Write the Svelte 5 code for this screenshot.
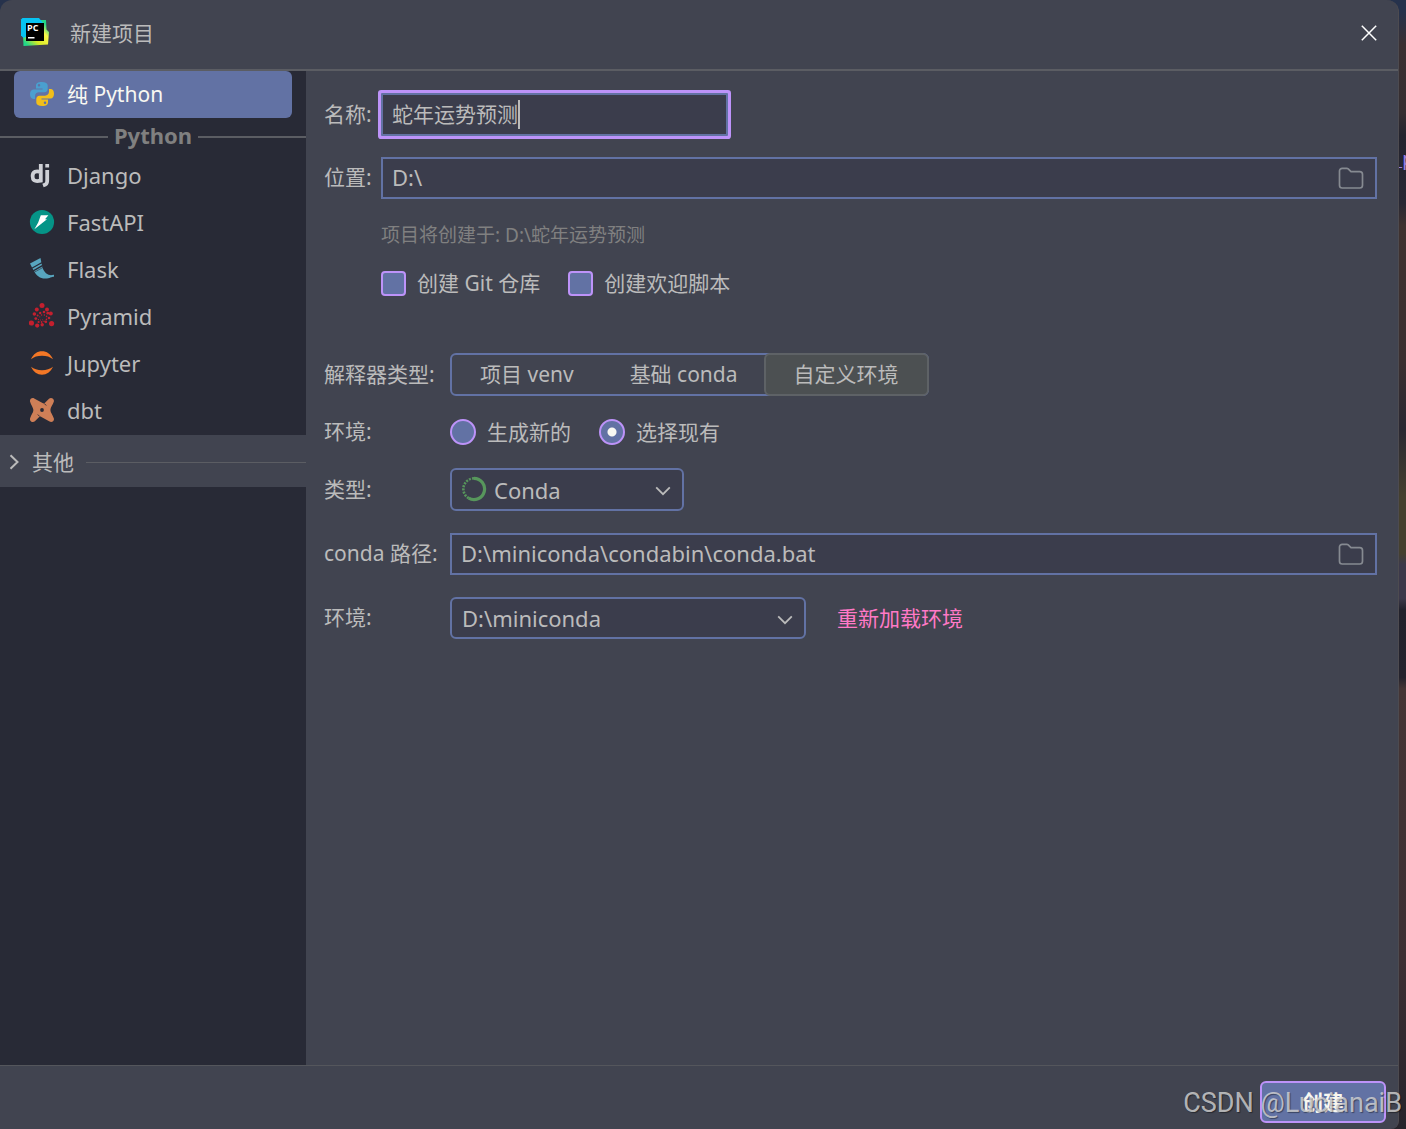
<script lang="ts">
	let name = $state('蛇年运势预测');
	let location = $state('D:\\');
	let condaPath = $state('D:\\miniconda\\condabin\\conda.bat');
	let git = $state(false);
	let welcome = $state(false);
	let envMode = $state('existing');
	let interpreter = $state('自定义环境');
	let selected = $state('纯 Python');

	const frameworks = ['Django', 'FastAPI', 'Flask', 'Pyramid', 'Jupyter', 'dbt'];
	const interpreters = ['项目 venv', '基础 conda', '自定义环境'];

	// rings of dots for the Pyramid logo, from the outside in
	const pyramidDots = [
		[13, 2.6, 2.5], [7.8, 6.4, 2], [18, 6.4, 2], [5.4, 11, 1.8], [21.8, 10.4, 2],
		[2.4, 20, 2.6], [22.6, 20.6, 2.6], [8.2, 22.6, 2.1], [13.2, 21.8, 1.7], [16.8, 18.8, 1.4],
		[11.2, 10, 1.2], [15, 9, 1.3], [18.8, 10.2, 1.4], [6.8, 15.6, 1.4], [9.6, 19, 1.1],
		[20, 15, 1.3], [8.6, 12.6, 1], [17.6, 13.4, 0.8], [17.4, 16.4, 0.8], [12.6, 19, 0.9],
		[9.4, 16.6, 0.7], [15, 18.2, 0.7], [12.6, 12, 0.7], [15.4, 12, 0.7], [10.8, 13.8, 0.6],
		[11.4, 17, 0.6], [13.6, 16.8, 0.5]
	];
</script>

{#snippet folder()}
	<button class="browse" type="button" aria-label="浏览">
		<svg width="26" height="24" viewBox="0 0 26 24" fill="none" stroke="currentColor" stroke-width="1.7">
			<path d="M1.500 5a2.700 2.700 0 0 1 2.700-2.700h4.600c.6 0 1 .2 1.400.6L13 5.700h8.800a2.700 2.700 0 0 1 2.700 2.700v10.900a2.700 2.700 0 0 1-2.700 2.700H4.200a2.700 2.700 0 0 1-2.700-2.700z" />
		</svg>
	</button>
{/snippet}

{#snippet chevron()}
	<svg class="chevron" width="16" height="10" viewBox="0 0 16 10" fill="none" stroke="currentColor" stroke-width="1.8">
		<path d="M1.200 1.400 8 8.200l6.800-6.800" />
	</svg>
{/snippet}

{#snippet icon(id: string)}
	<svg class="icon" width="26" height="26" viewBox="0 0 26 26">
		{#if id === '纯 Python'}
			<path fill="#4a9fcf" d="M12.800 1C8.600 1 7 2.600 7 4.500V7.500h6.500v1H4.500C2 8.500 1 10.700 1 13.300s1.200 4.700 3.500 4.700H6v-2.800c0-2.300 1.700-3.900 4-3.900h5.500c1.900 0 3.200-1.500 3.200-3.300V4.500C18.700 2.300 16.500 1 12.800 1zM10 2.900a1.200 1.200 0 1 1 0 2.500 1.200 1.200 0 0 1 0-2.500z" />
			<path fill="#f2bf1a" d="M13.200 25c4.200 0 5.800-1.600 5.800-3.500v-3h-6.500v-1h9c2.500 0 3.500-2.200 3.500-4.800S23.800 8 21.500 8H20v2.800c0 2.300-1.700 3.900-4 3.900h-5.500c-1.900 0-3.200 1.500-3.200 3.300v3.500c0 2.200 2.200 3.500 5.900 3.500zm2.800-1.900a1.200 1.200 0 1 1 0-2.500 1.200 1.200 0 0 1 0 2.500z" />
		{:else if id === 'Django'}
			<g fill="none" stroke="#ced0d6" stroke-width="3.800">
				<path d="M11.800 2v16.600c-7 1.500-8.200-.8-8.200-4.600 0-4.400 3.500-5.500 8.200-4" />
				<path d="M18.200 8v10.500c0 3-.8 3.800-4.200 5" />
				<path d="M18.200 2v3.600" />
			</g>
		{:else if id === 'FastAPI'}
			<circle cx="13" cy="13" r="12.100" fill="#059487" />
			<path fill="#fff" d="M11.800 6.200h7.600L16 10.200h2L5.400 20.200l3.800-6.800z" />
		{:else if id === 'Flask'}
			<g fill="#58a6bf">
				<path d="M1 7.500 11.500 2l.8 4.200L3 11.500z" />
				<path d="m3.500 12.600 9-5.200.5 1.700-8.600 5z" />
				<path d="m5 15.200 8.300-4.800c.8 4 3.700 8 7.700 8.700 1.600.3 2.800-.5 4-.2v1.800c-2.500 0-4.200 1.600-8.500 1.900C11.500 22.900 7.500 19.500 5 15.200z" />
			</g>
			<path d="m4.500 16.700 9.500-5.300" stroke="#282a36" stroke-width="0.6" />
		{:else if id === 'Pyramid'}
			{#each pyramidDots as [cx, cy, r]}
				<circle {cx} {cy} {r} fill="#c41f2e" />
			{/each}
		{:else if id === 'Jupyter'}
			<path fill="#f37726" d="M2 9.200C4.500 3.900 8.300 1.300 13 1.300s8.500 2.600 11 7.900C21 6.900 17.500 5.800 13 5.800S5 6.900 2 9.200zM2 16.800c2.500 5.300 6.300 7.900 11 7.900s8.500-2.600 11-7.900c-3 2.300-6.500 3.400-11 3.400S5 19.100 2 16.800z" />
		{:else}
			<path fill="#cf7f57" d="M1 4.400C.6 2 3 .3 5.200 1.400l8.300 4.700c1.100.6 1.700.4 2.500-.4l4-4c2.200-2 5.700.2 4.800 3.100-1 3.200-3.400 5.700-3.400 8.200s2.400 5 3.400 8.200c.9 2.600-1.800 4.600-4.200 3.400l-8.200-4.700c-1.100-.6-1.700-.4-2.500.4l-4 4c-2.200 2-5.700-.2-4.800-3.100C2 18 4.400 15.500 4.400 13S1.700 7.500 1 4.400z" />
			<circle cx="13" cy="13" r="1.900" fill="#282a36" />
			<path d="m15.200 6.600 2.200 1.800M10.800 19.400l-2.200-1.800" stroke="#282a36" stroke-width="0.8" />
		{/if}
	</svg>
{/snippet}

{#snippet project(id: string)}
	<button class="item" class:selected={selected === id} type="button" onclick={() => (selected = id)}>
		{@render icon(id)}
		{id}
	</button>
{/snippet}

<div class="desktop">
	<span class="behind" aria-hidden="true">_p</span>
	<div class="dialog">
		<header>
			<svg width="30" height="30" viewBox="0 1 30 30">
				<defs>
					<linearGradient id="warm" x1="0" y1="1" x2="1" y2="0">
						<stop offset="0.100" stop-color="#21d789" />
						<stop offset="0.350" stop-color="#d5ea24" />
						<stop offset="0.650" stop-color="#fcf84a" />
						<stop offset="0.850" stop-color="#21d789" />
					</linearGradient>
				</defs>
				<path fill="url(#warm)" d="M19 3h7l.5 9.500L29 15l-1 12.500L3.500 29 3 18z" />
				<path fill="#07c3f2" d="M1 2.500 2.500 1H19l4 5-13 12-6.500 3L1 18.500z" />
				<path d="M6 6h18v18H6z" />
				<path d="M8 20.700h6.500" stroke="#fff" stroke-width="1.500" />
				<text x="7" y="14" fill="#fff">PC</text>
			</svg>
			<h1>新建项目</h1>
			<button class="close" type="button" aria-label="关闭">
				<svg width="16" height="16" viewBox="0 0 16 16" stroke="currentColor" stroke-width="1.500">
					<path d="m.8.800 14.400 14.400M15.200.8.800 15.200" />
				</svg>
			</button>
		</header>

		<div class="body">
			<nav>
				{@render project('纯 Python')}
				<div class="group"><span>Python</span></div>
				<div class="frameworks">
					{#each frameworks as id}
						{@render project(id)}
					{/each}
				</div>
				<button class="other" type="button">
					<svg width="11" height="16" viewBox="0 0 11 16" fill="none" stroke="currentColor" stroke-width="2">
						<path d="m1.500 1.200 7 6.800-7 6.800" />
					</svg>
					其他
				</button>
			</nav>

			<form onsubmit={(e) => e.preventDefault()}>
				<div class="grid basics">
					<label class="caption" for="name">名称:</label>
					<div class="field focused">
						<input id="name" type="text" bind:value={name} />
						<span class="caret"></span>
					</div>

					<label class="caption" for="location">位置:</label>
					<div class="field path">
						<input id="location" type="text" bind:value={location} />
						{@render folder()}
					</div>
				</div>

				<div class="extras">
					<p>项目将创建于: {location}{name}</p>
					<div class="choices">
						<label><input type="checkbox" bind:checked={git} />创建 Git 仓库</label>
						<label><input type="checkbox" bind:checked={welcome} />创建欢迎脚本</label>
					</div>
				</div>

				<div class="grid env">
					<span class="caption">解释器类型:</span>
					<div class="segments">
						{#each interpreters as type}
							<button type="button" class:active={interpreter === type} onclick={() => (interpreter = type)}>{type}</button>
						{/each}
					</div>

					<span class="caption">环境:</span>
					<div class="choices">
						<label><input type="radio" value="new" bind:group={envMode} />生成新的</label>
						<label><input type="radio" value="existing" bind:group={envMode} />选择现有</label>
					</div>

					<label class="caption" for="type">类型:</label>
					<div class="select type">
						<svg class="conda" width="26" height="26" viewBox="0 0 26 26" fill="none" stroke="#57965c">
							<path d="M13 2.400a10.600 10.600 0 1 1-5.300 19.800" stroke-width="3.200" />
							<path d="M7.700 22.200A10.600 10.600 0 0 1 13 2.400" stroke-width="2.600" stroke-dasharray="2 1.200" />
							<path d="M8.600 20A8.700 8.700 0 0 1 12 4.300" stroke="#3b3d4c" stroke-width="1" stroke-dasharray="1.500 2" />
						</svg>
						<select id="type"><option>Conda</option></select>
						{@render chevron()}
					</div>

					<label class="caption" for="conda-path">conda 路径:</label>
					<div class="field path">
						<input id="conda-path" type="text" bind:value={condaPath} />
						{@render folder()}
					</div>

					<label class="caption" for="env">环境:</label>
					<div class="reload">
						<div class="select">
							<select id="env"><option>D:\miniconda</option></select>
							{@render chevron()}
						</div>
						<a href="#reload">重新加载环境</a>
					</div>
				</div>
			</form>
		</div>

		<footer>
			<button class="create" type="button">创建</button>
		</footer>
	</div>
	<span class="watermark">CSDN @LucianaiB</span>
</div>

<style>
	:global(body) {
		margin: 0;
		background: #2b2a33;
	}
	.desktop {
		position: relative;
		box-sizing: border-box;
		min-height: 100vh;
		display: flex;
		padding-right: 7px;
		background: linear-gradient(
			#26324c 1%,
			#3a3032 4%,
			#352e31 10%,
			#24242e 12%,
			#282834 18%,
			#3f3230 20%,
			#3a2f30 32%,
			#2a2832 38%,
			#45402f 44%,
			#45402f 49%,
			#3c394a 50%,
			#3c394a 53%,
			#22222c 54%,
			#24232d 60%,
			#443535 61%,
			#3c2f33 85%,
			#26242c
		);
		font-family: 'Noto Sans', 'Noto Sans CJK SC', sans-serif;
		font-size: 21px;
		line-height: 26px;
		color: #bbbbbb;
		overflow: hidden;
	}
	.desktop * {
		box-sizing: border-box;
	}
	/* editor text peeking out past the dialog's right edge */
	.behind {
		position: absolute;
		top: 148px;
		right: -8px;
		font-family: 'Liberation Mono', monospace;
		font-size: 20px;
		color: #9b7fe0;
	}
	.dialog {
		position: relative;
		flex: 1;
		display: flex;
		flex-direction: column;
		background: #414450;
		border-right: 1px solid #4d4b50;
		border-radius: 12px 12px 8px 0;
		overflow: hidden;
	}
	button,
	input,
	select {
		font: inherit;
		color: inherit;
		margin: 0;
		border: 0;
		padding: 0;
		background: none;
	}
	svg {
		display: block;
		flex: none;
	}

	header {
		display: flex;
		align-items: center;
		gap: 20px;
		height: 71px;
		padding: 0 21px 4px 20px;
		border-bottom: 2px solid #5b5d63;
	}
	header text {
		font: bold 9px 'Open Sans', sans-serif;
	}
	h1 {
		flex: 1;
		margin: 0;
		font-size: 21px;
		font-weight: 400;
	}
	.close {
		color: #ffffff;
	}

	.body {
		flex: 1;
		display: flex;
	}
	nav {
		width: 306px;
		flex: none;
		display: flex;
		flex-direction: column;
		background: #282a36;
	}
	.item {
		display: flex;
		align-items: center;
		gap: 12px;
		height: 47px;
		margin: 0 14px;
		padding: 0 15px 2px;
		border-radius: 6px;
		text-align: left;
	}
	.item.selected {
		background: #6272a4;
		color: #f8f8f2;
	}
	.frameworks {
		display: flex;
		flex-direction: column;
		padding-bottom: 1px;
		font-size: 22px;
	}
	.group {
		display: flex;
		align-items: center;
		gap: 6px;
		height: 34px;
		font-size: 22px;
		font-weight: 700;
		color: #808080;
	}
	.group::before,
	.group::after {
		content: '';
		flex: 1;
		height: 2px;
		margin-top: 4px;
		background: #5b5d63;
	}
	.other {
		display: flex;
		align-items: center;
		gap: 12px;
		height: 52px;
		padding: 2px 0 0 9px;
		background: #414450;
	}
	.other::after {
		content: '';
		flex: 1;
		height: 1px;
		background: #5b5d63;
	}

	form {
		flex: 1;
		min-width: 0;
		padding: 22px 21px 22px 18px;
	}
	.grid {
		display: grid;
		align-items: center;
	}
	.basics {
		grid-template-columns: 57px 1fr;
		row-gap: 21px;
	}
	.env {
		grid-template-columns: 126px 1fr;
		row-gap: 22px;
	}
	.caption {
		padding-bottom: 2px;
	}
	.field {
		position: relative;
		display: flex;
		align-items: center;
		height: 42px;
		padding: 0 11px 0 9px;
		background: #3b3d4c;
		border: 2px solid #6272a4;
	}
	.field input {
		flex: 1;
		min-width: 0;
		padding-bottom: 2px;
		outline: none;
	}
	.path input {
		font-size: 22px;
	}
	.focused {
		width: 347px;
		height: 43px;
		box-shadow: 0 0 0 3px #bd93f9;
		border-radius: 1px;
	}
	.caret {
		position: absolute;
		left: calc(9px + 6em);
		width: 2px;
		height: 29px;
		background: #bbbbbb;
	}
	.browse {
		color: #868a91;
	}

	.extras {
		display: flex;
		flex-direction: column;
		gap: 21px;
		margin: 23px 0 56px 57px;
	}
	p {
		margin: 0;
		font-size: 19px;
		color: #808080;
	}
	.choices {
		display: flex;
		gap: 28px;
		min-height: 28px;
	}
	.choices label {
		display: flex;
		align-items: center;
		gap: 11px;
	}
	input[type='checkbox'],
	input[type='radio'] {
		appearance: none;
		width: 25px;
		height: 25px;
		background: #6272a4;
		border: 2px solid #bd93f9;
		border-radius: 4px;
	}
	input[type='radio'] {
		width: 26px;
		height: 26px;
		border-radius: 50%;
	}
	input:checked {
		background: radial-gradient(circle, #f8f8f2 4px, #6272a4 5px);
	}

	.segments {
		display: flex;
		justify-self: start;
		height: 43px;
		border: 2px solid #6272a4;
		border-radius: 6px;
	}
	.segments button {
		padding: 0 28px 2px;
	}
	.segments .active {
		margin: -2px;
		background: #4c5052;
		border: 2px solid #5e6266;
		border-radius: 6px;
	}
	.select {
		position: relative;
		width: 356px;
		height: 42px;
	}
	.select select {
		appearance: none;
		width: 100%;
		height: 100%;
		padding: 0 44px 0 10px;
		background: #3b3d4c;
		border: 2px solid #6272a4;
		border-radius: 6px;
		font-size: 22px;
	}
	.type {
		width: 234px;
		height: 43px;
	}
	.type select {
		padding-left: 42px;
	}
	.conda {
		position: absolute;
		left: 11px;
		top: 8px;
	}
	.chevron {
		position: absolute;
		right: 13px;
		top: 18px;
		pointer-events: none;
	}
	.reload {
		display: flex;
		align-items: center;
		gap: 31px;
	}
	a {
		color: #ff79c6;
		text-decoration: none;
	}

	footer {
		display: flex;
		justify-content: flex-end;
		height: 64px;
		padding: 15px 12px 0;
		border-top: 1px solid #54565c;
	}
	.create {
		width: 126px;
		height: 42px;
		background: #6272a4;
		border: 2px solid #bd93f9;
		border-radius: 6px;
		font-weight: 700;
		color: #f8f8f2;
	}
	.watermark {
		position: absolute;
		right: 4px;
		bottom: 10px;
		font: 27px/32px Roboto, sans-serif;
		color: rgb(215 215 215 / 80%);
		text-shadow: 1px 1px 1px rgb(0 0 0 / 40%);
		pointer-events: none;
	}
</style>
